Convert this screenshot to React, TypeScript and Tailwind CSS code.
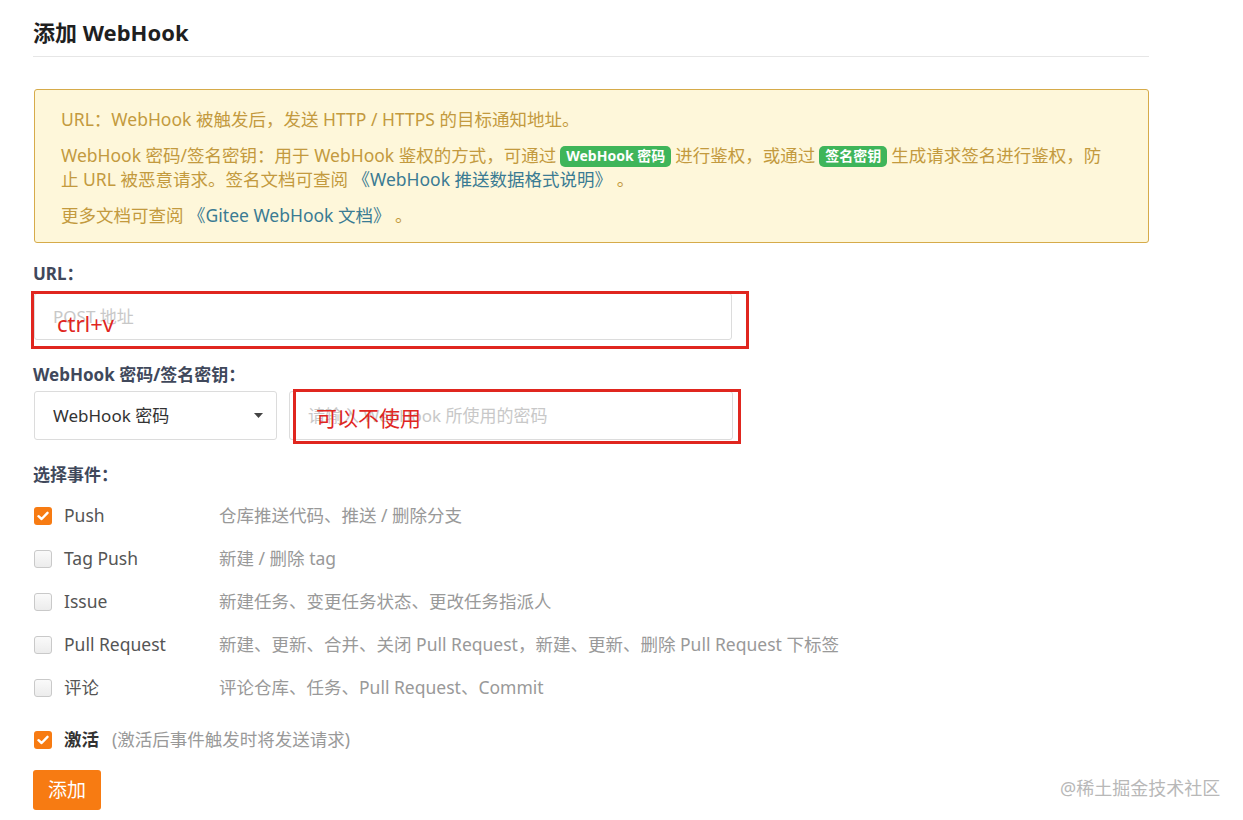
import React from 'react';

const font = { fontFamily: '"Noto Sans", "Noto Sans CJK SC", sans-serif' };

interface EventItem {
  name: string;
  desc: string;
  checked: boolean;
}

const events: EventItem[] = [
  { name: 'Push', desc: '仓库推送代码、推送 / 删除分支', checked: true },
  { name: 'Tag Push', desc: '新建 / 删除 tag', checked: false },
  { name: 'Issue', desc: '新建任务、变更任务状态、更改任务指派人', checked: false },
  { name: 'Pull Request', desc: '新建、更新、合并、关闭 Pull Request，新建、更新、删除 Pull Request 下标签', checked: false },
  { name: '评论', desc: '评论仓库、任务、Pull Request、Commit', checked: false },
];

const Checkbox: React.FC<{ checked: boolean }> = ({ checked }) =>
  checked ? (
    <span className="flex h-[18px] w-[18px] shrink-0 items-center justify-center rounded-[3px] bg-[#f77b12]">
      <svg width="12" height="10" viewBox="0 0 12 10">
        <path d="M1.5 5.2 4.6 8 10.5 1.8" fill="none" stroke="#fff" strokeWidth="2.4" strokeLinecap="round" strokeLinejoin="round" />
      </svg>
    </span>
  ) : (
    <span className="block h-[18px] w-[18px] shrink-0 rounded-[3px] border border-[#c9c9c9] bg-gradient-to-b from-[#fafafa] to-[#ececec]" />
  );

const Tag: React.FC<{ children: React.ReactNode }> = ({ children }) => (
  <span className="mx-[4px] inline-flex h-[21px] items-center rounded-[5px] bg-[#3fb55a] px-[6px] align-[1px] text-[14px] font-bold leading-none text-white">
    {children}
  </span>
);

const App: React.FC = () => {
  return (
    <div className="relative min-h-[820px] bg-white" style={font}>
      <div className="pl-[33px] pt-[18px]" style={{ width: 1149 }}>
        <h2 className="border-b border-[#e6e6e6] pb-[10px] text-[22px] font-bold leading-[28px] text-[#1f1f1f]">
          添加 WebHook
        </h2>

        {/* notice */}
        <div className="mt-[32px] ml-px rounded-[3px] border border-[#d6ab4a] bg-[#fef7da] pb-[15px] pl-[26px] pr-[36px] pt-[17px] text-[17.5px] leading-[24px] text-[#c39a3e]">
          <p>URL：WebHook 被触发后，发送 HTTP / HTTPS 的目标通知地址。</p>
          <p className="mt-[12px]">
            WebHook 密码/签名密钥：用于 WebHook 鉴权的方式，可通过<Tag>WebHook 密码</Tag>进行鉴权，或通过<Tag>签名密钥</Tag>生成请求签名进行鉴权，防止 URL 被恶意请求。签名文档可查阅 <span className="text-[#3a7b93]">《WebHook 推送数据格式说明》</span> 。
          </p>
          <p className="mt-[12px]">
            更多文档可查阅 <span className="text-[#3a7b93]">《Gitee WebHook 文档》</span> 。
          </p>
        </div>

        {/* URL */}
        <div className="mt-[20px] text-[17px] font-bold leading-[22px] text-[#40485b]">URL：</div>
        <div className="relative mt-[8px] ml-px w-[698px]">
          <input
            className="block h-[47px] w-full rounded-[3px] border border-[#dcdcdc] pl-[18px] text-[17px] text-[#333] outline-none placeholder:text-[#c8c8c8]"
            placeholder="POST 地址"
            style={font}
          />
          <div className="pointer-events-none absolute -left-[3px] -top-[2px] h-[58px] w-[718px] border-[3px] border-[#e0261f]">
            <span className="absolute left-[23px] top-[15px] text-[22px] leading-[28px] text-[#e0261f]">ctrl+v</span>
          </div>
        </div>

        {/* secret */}
        <div className="mt-[24px] text-[17px] font-bold leading-[22px] text-[#40485b]">WebHook 密码/签名密钥：</div>
        <div className="mt-[5px] ml-px flex gap-[12px]">
          <div className="flex h-[49px] w-[243px] items-center justify-between rounded-[3px] border border-[#dcdcdc] pl-[18px] pr-[13px] text-[17px] text-[#333]">
            <span>WebHook 密码</span>
            <svg width="9" height="5" viewBox="0 0 9 5">
              <path d="M0 0h9L4.5 5z" fill="#444" />
            </svg>
          </div>
          <div className="relative w-[444px]">
            <input
              className="block h-[49px] w-full rounded-[3px] border border-[#dcdcdc] pl-[18px] text-[17px] text-[#333] outline-none placeholder:text-[#c8c8c8]"
              placeholder="请输入 WebHook 所使用的密码"
              style={font}
            />
            <div className="pointer-events-none absolute left-[4px] -top-[2px] h-[55px] w-[448px] border-[3px] border-[#e0261f]">
              <span className="absolute left-[20px] top-[12px] text-[21px] leading-[28px] text-[#e0261f]">可以不使用</span>
            </div>
          </div>
        </div>

        {/* events */}
        <div className="mt-[24px] text-[17px] font-bold leading-[22px] text-[#40485b]">选择事件：</div>
        <div className="mt-[8px] ml-px flex flex-col">
          {events.map((e) => (
            <div key={e.name} className="flex h-[43px] items-center text-[17.5px]">
              <Checkbox checked={e.checked} />
              <span className="ml-[12px] w-[155px] text-[#555]">{e.name}</span>
              <span className="text-[#999]">{e.desc}</span>
            </div>
          ))}
        </div>

        <div className="mt-[9px] ml-px flex h-[43px] items-center text-[17.5px]">
          <Checkbox checked />
          <span className="ml-[12px] font-bold text-[#333]">激活</span>
          <span className="ml-[13px] text-[#999]">(激活后事件触发时将发送请求)</span>
        </div>

        <button
          className="mt-[9px] h-[40px] w-[68px] rounded-[3px] bg-[#f77b12] text-[19px] text-white"
          style={font}
        >
          添加
        </button>
      </div>

      <div className="absolute left-[1060px] top-[775px] text-[18px] leading-[26px] text-[#b8b8b8]">@稀土掘金技术社区</div>
    </div>
  );
};

export default App;
